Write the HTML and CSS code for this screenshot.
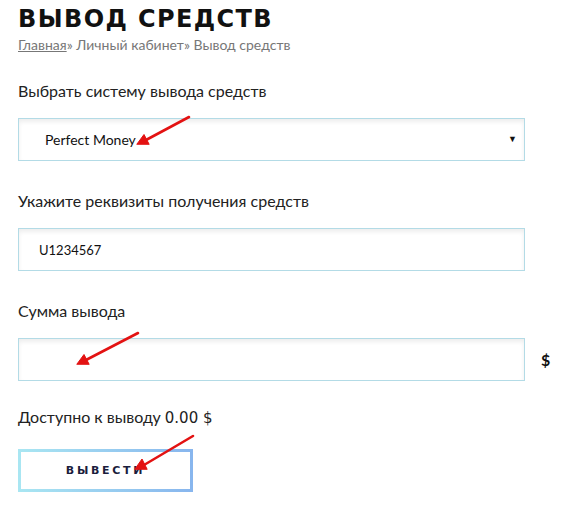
FILE: index.html
```html
<!DOCTYPE html>
<html lang="ru">
<head>
    <meta charset="UTF-8">
    <title>Вывод средств</title>
    <link rel="stylesheet" href="styles.css">
</head>
<body>
    <div class="page">
        <h1 class="title">Вывод средств</h1>
        <div class="crumbs"><a href="#">Главная</a>» Личный кабинет» Вывод средств</div>

        <form class="withdraw">
            <div class="field">
                <label>Выбрать систему вывода средств</label>
                <div class="select-wrap">
                    <select class="box">
                        <option>Perfect Money</option>
                    </select>
                    <span class="caret">▼</span>
                </div>
            </div>

            <div class="field">
                <label>Укажите реквизиты получения средств</label>
                <input class="box req" type="text" value="U1234567">
            </div>

            <div class="field">
                <label>Сумма вывода</label>
                <div class="amount-row">
                    <input class="box" type="text">
                    <span class="cur">$</span>
                </div>
            </div>

            <div class="avail">Доступно к выводу <b>0.00 $</b></div>

            <button type="button" class="btn">Вывести</button>
        </form>
    </div>

    <svg class="marks" width="581" height="522" viewBox="0 0 581 522">
        <g stroke="#e31212" stroke-width="2.6" stroke-linecap="round" fill="#e31212">
            <line x1="189" y1="117" x2="146" y2="140"/>
            <polygon points="137,144 144,134.5 149,144" stroke-width="1"/>
            <line x1="138" y1="333" x2="86" y2="360"/>
            <polygon points="77,364 84,354.5 89,364" stroke-width="1"/>
            <line x1="193" y1="436" x2="144" y2="465"/>
            <polygon points="135,469 142,459 147,469" stroke-width="1"/>
        </g>
    </svg>
</body>
</html>
```

FILE: styles.css
```css
body { margin: 0; background: #fff; font-family: "Lato", "Open Sans", sans-serif; color: #222; }
.page { padding: 6px 0 0 18px; }
.title { margin: 0; font-family: "DejaVu Sans", sans-serif; font-weight: bold; font-size: 24px; line-height: 26px; letter-spacing: 1.4px; text-transform: uppercase; color: #111; }
.crumbs { margin-top: 5px; font-size: 14px; line-height: 16px; color: #777; }
.crumbs a { color: #777; }
.withdraw { margin-top: 28px; }
.field { margin-bottom: 30px; }
.field label { display: block; font-size: 16px; line-height: 20px; margin-bottom: 17px; color: #222; }
.box { box-sizing: border-box; width: 507px; height: 43px; border: 1px solid #b3dbe6; box-shadow: inset 0 3px 4px rgba(0, 0, 0, 0.07); background: #fff; font-family: "Lato", sans-serif; font-size: 13px; color: #111; outline: none; }
select.box { appearance: none; -webkit-appearance: none; padding-left: 26px; font-size: 14px; }
.req { padding-left: 20px; }
.select-wrap { position: relative; width: 507px; }
.caret { position: absolute; right: 8px; top: 15px; font-size: 9px; color: #111; }
.amount-row { display: flex; align-items: center; }
.cur { margin-left: 16px; font-size: 16px; font-weight: bold; color: #111; }
.avail { font-size: 16px; line-height: 20px; margin-top: -4px; }
.avail b { font-family: "DejaVu Sans", sans-serif; font-weight: normal; font-size: 15px; }
.btn { margin-top: 21px; width: 175px; height: 43px; background: #fff; border: 3px solid; border-image: linear-gradient(90deg, #a9e6f2, #88b6ee) 1; font-family: "DejaVu Sans", sans-serif; font-weight: bold; font-size: 11px; letter-spacing: 2.7px; text-transform: uppercase; color: #1b1d3d; cursor: pointer; }
.marks { position: absolute; top: 0; left: 0; pointer-events: none; }
```
